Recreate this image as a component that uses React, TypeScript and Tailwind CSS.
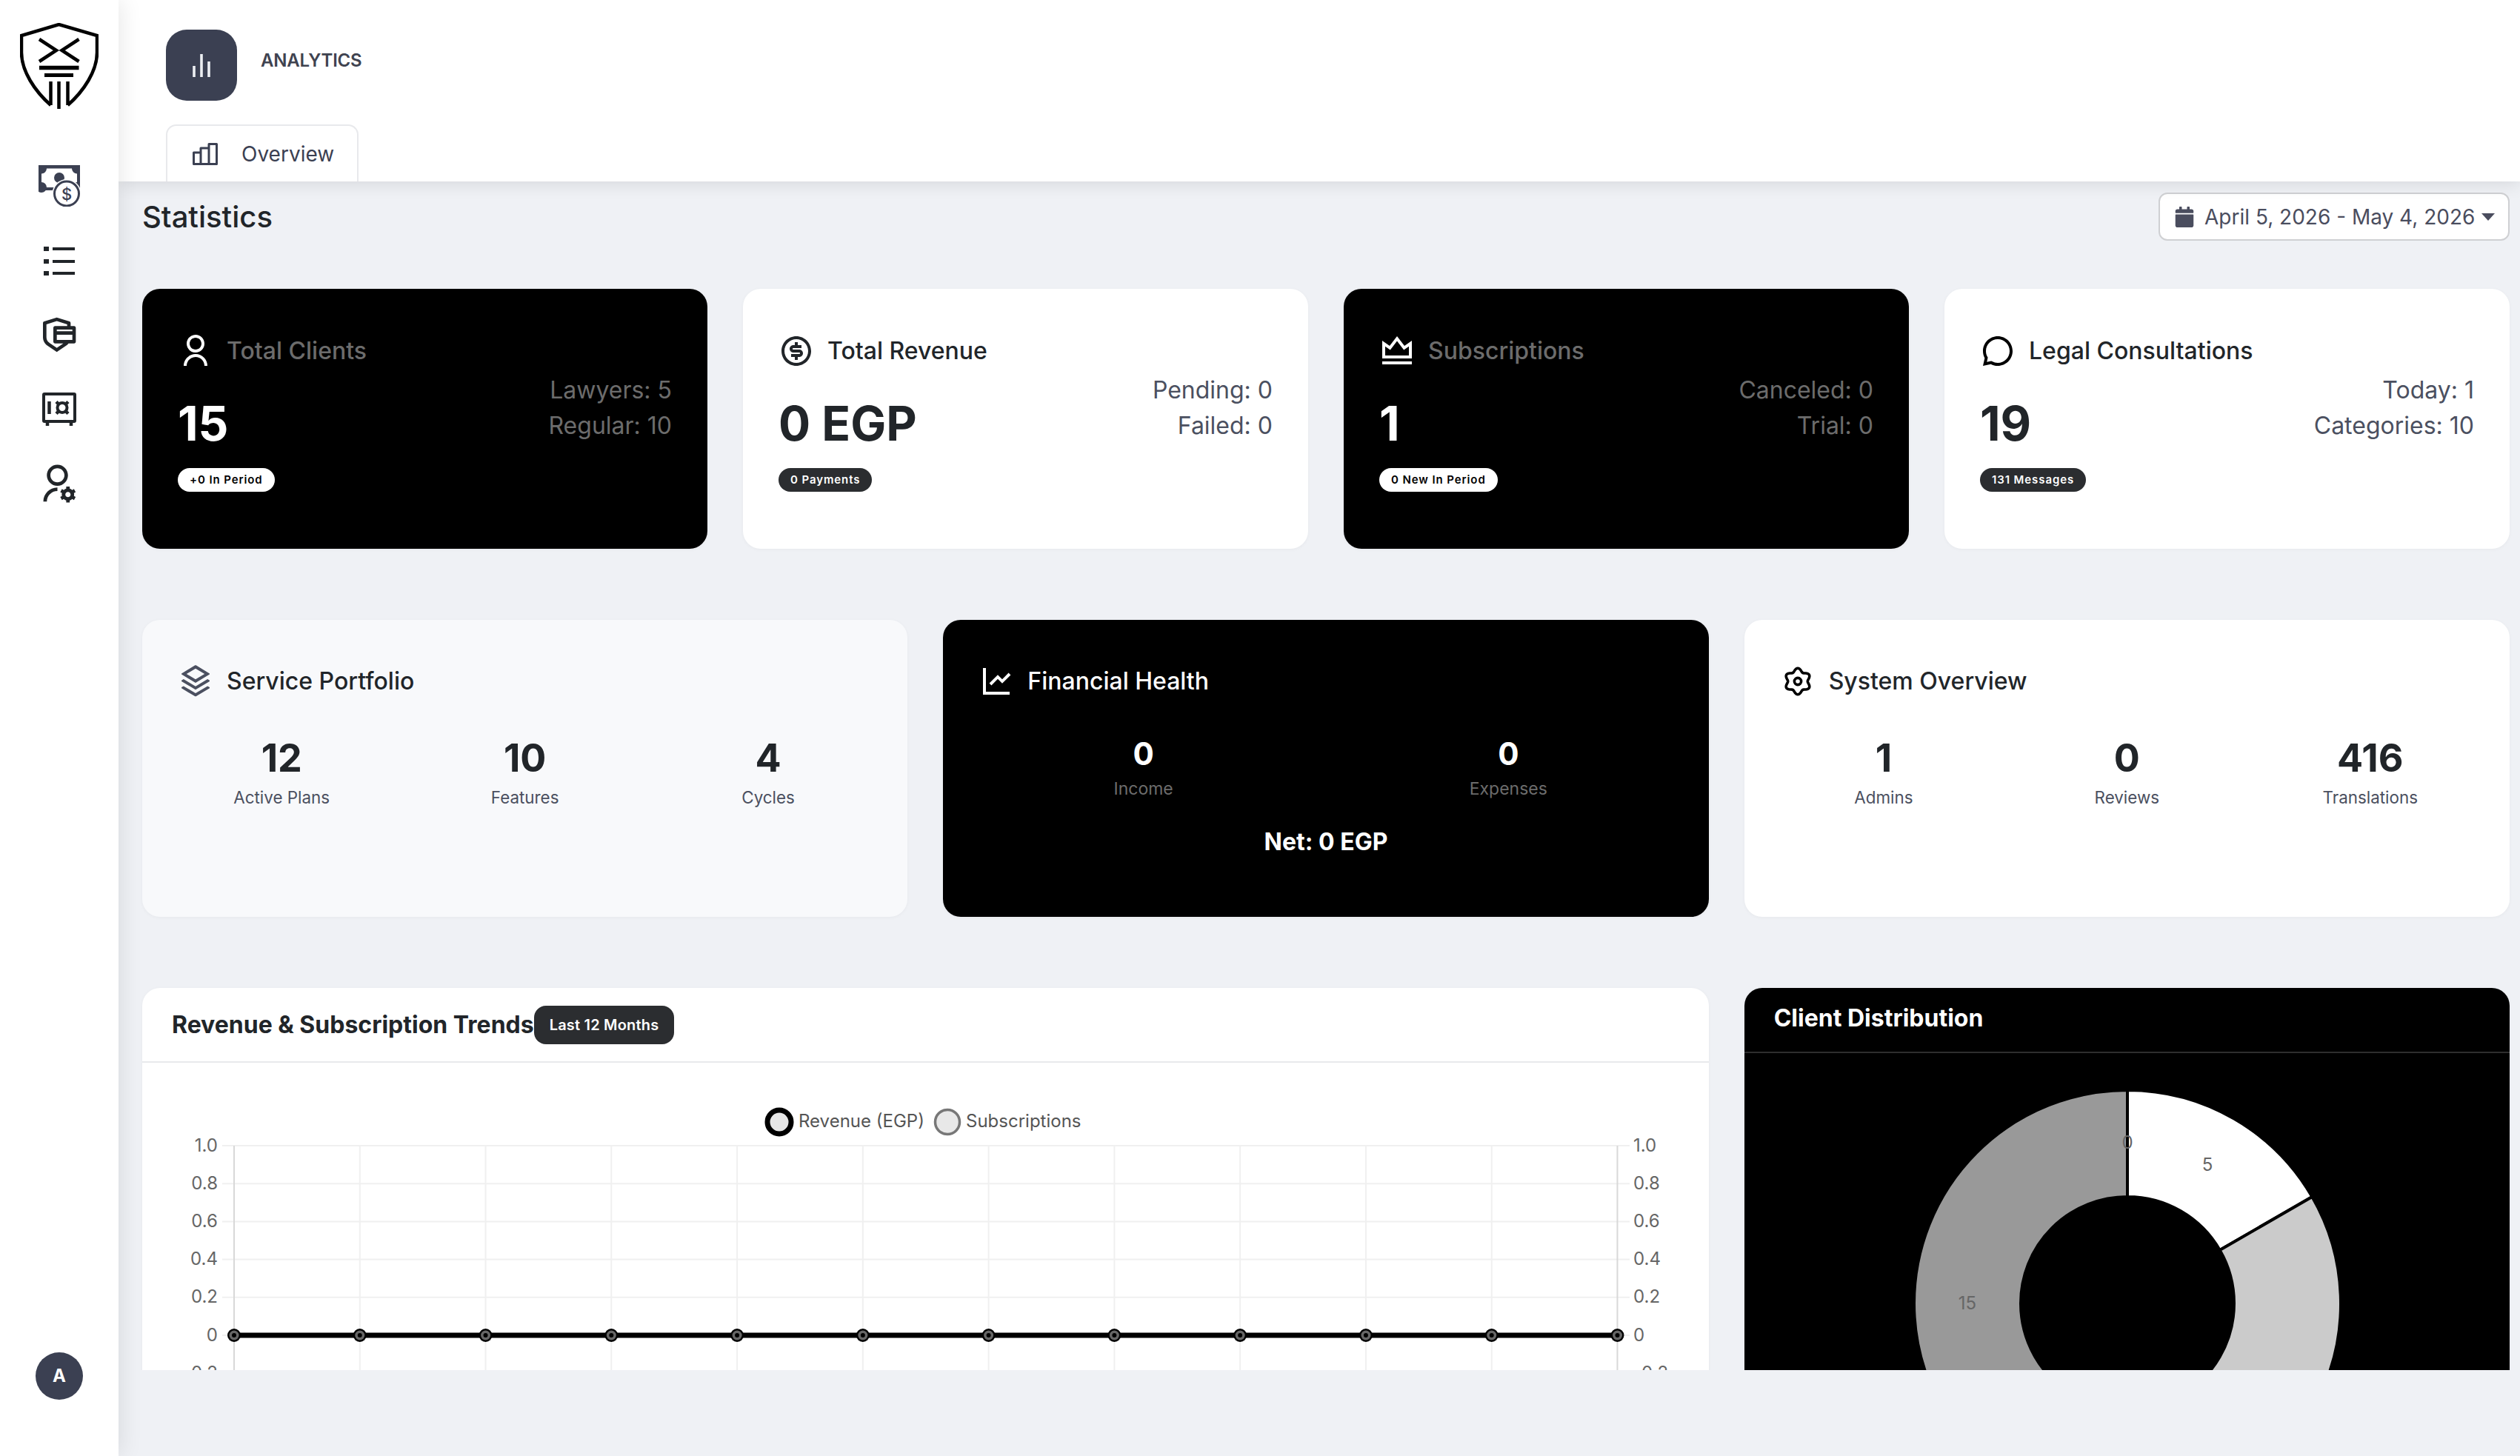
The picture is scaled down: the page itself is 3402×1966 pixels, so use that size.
import { RiUserLine, RiMoneyDollarCircleLine, RiVipCrownLine, RiChat3Line, RiStackLine, RiLineChartLine, RiSecurePaymentLine, RiUserSettingsLine } from 'react-icons/ri';
import { FaCalendar } from 'react-icons/fa';
import type { ReactNode } from 'react';

const ticks = ['1.0', '0.8', '0.6', '0.4', '0.2', '0', '-0.2'];
const points = Array.from({ length: 12 }, (_, i) => 124 + i * 169.77);

function Logo() {
  return (
    <svg width="106" height="116" viewBox="0 0 106 116" fill="none" stroke="#000">
      <path d="M41.5 111 C20 92 2 65 2 40 V17 L52.5 2 L104 17 V40 C104 65 86 92 64.5 111" strokeWidth="4.5" />
      <path d="M26 22 L49 37 L26 52 M79.5 22 L56.5 37 L79.5 52" strokeWidth="4.5" />
      <path d="M26 60.5 H79.5" strokeWidth="5.5" />
      <path d="M33 70.5 H72" strokeWidth="5" />
      <path d="M41.5 79 V111 M52.5 79 V116 M64.5 79 V111" strokeWidth="4.5" />
    </svg>
  );
}

function MoneyIcon() {
  return (
    <svg width="56" height="56" viewBox="0 0 56 56" fill="none">
      <rect x="0" y="0" width="56" height="34" rx="2" fill="#3b4052" />
      <rect x="4" y="4.5" width="48" height="25.5" fill="#fff" />
      <circle cx="4" cy="4.5" r="7" fill="#3b4052" />
      <circle cx="52" cy="4.5" r="7" fill="#3b4052" />
      <circle cx="4" cy="30" r="7" fill="#3b4052" />
      <circle cx="52" cy="30" r="7" fill="#3b4052" />
      <circle cx="28" cy="17" r="7" fill="#3b4052" />
      <circle cx="38" cy="38.5" r="19.5" fill="#fff" />
      <circle cx="38" cy="38.5" r="16.5" fill="#fff" stroke="#3b4052" strokeWidth="3" />
      <text x="38" y="46.5" textAnchor="middle" fontSize="22" fontWeight="500" fill="#3b4052" className="[font-family:Inter,sans-serif]">$</text>
    </svg>
  );
}

function ListIcon() {
  return (
    <svg width="42" height="40" viewBox="0 0 42 40" fill="#212529">
      <rect x="0" y="0" width="7" height="6" />
      <rect x="12" y="1" width="30" height="4" />
      <rect x="0" y="17" width="7" height="6" />
      <rect x="12" y="18" width="30" height="4" />
      <rect x="0" y="33" width="7" height="6" />
      <rect x="12" y="34" width="30" height="4" />
    </svg>
  );
}

function SafeIcon() {
  return (
    <svg width="46" height="45" viewBox="0 0 46 45" fill="none" stroke="#212529">
      <rect x="2" y="2" width="42" height="37" rx="1" strokeWidth="4" />
      <path d="M7 39 V45 M39 39 V45" strokeWidth="4.5" />
      <path d="M9.5 12 V29" strokeWidth="4.5" />
      <circle cx="27" cy="20.5" r="6.5" strokeWidth="4" />
      <path d="M19 12.5 L22.5 16 M35 12.5 L31.5 16 M19 28.5 L22.5 25 M35 28.5 L31.5 25" strokeWidth="4.5" />
    </svg>
  );
}

// six lobed gear, the icon packages have none with this small hub
function GearIcon() {
  const outline = Array.from({ length: 120 }, (_, i) => {
    const a = (i * Math.PI) / 60;
    const r = 15.5 + 2.2 * Math.cos(6 * a);
    return `${24 + r * Math.sin(a)} ${24 - r * Math.cos(a)}`;
  }).join(' L');
  return (
    <svg width="48" height="48" viewBox="0 0 48 48" fill="none" stroke="#000" strokeWidth="3.6" strokeLinejoin="round">
      <path d={`M${outline} Z`} />
      <circle cx="24" cy="24" r="4.6" />
    </svg>
  );
}

function Sidebar() {
  return (
    <aside className="relative z-20 flex h-full w-[160px] shrink-0 flex-col items-center bg-white pt-[31px] shadow-[4px_0_28px_rgba(0,0,0,0.09)]">
      <Logo />
      <div className="mt-[76px] flex h-[55px] items-center justify-center">
        <MoneyIcon />
      </div>
      <div className="mt-[55px]">
        <ListIcon />
      </div>
      <RiSecurePaymentLine className="mt-[51px] -ml-[2px] text-[#212529]" size={56} />
      <div className="mt-[50px]">
        <SafeIcon />
      </div>
      <RiUserSettingsLine className="mt-[50px] -ml-[6px] text-[#212529]" size={57} />
      <div className="mt-auto mb-[76px] flex h-16 w-16 items-center justify-center rounded-full bg-[#3b4052] text-[24px] font-bold text-white">A</div>
    </aside>
  );
}

function Header() {
  return (
    <header className="relative z-10 h-[245px] shrink-0 bg-white pt-[40px] pl-[64px] shadow-[0_4px_22px_rgba(0,0,0,0.1)]">
      <div className="flex items-center gap-[32px]">
        <div className="flex h-[96px] w-[96px] items-center justify-center rounded-[28px] bg-[#3b4052]">
          <svg width="28" height="32" viewBox="0 0 28 32" stroke="#eceef2" strokeWidth="3.6">
            <path d="M4 17 V32 M14 1 V32 M24 11 V32" />
          </svg>
        </div>
        <span className="pb-[12px] text-[24px] font-semibold tracking-[-0.2px] text-[#3f4350]">ANALYTICS</span>
      </div>
      <div className="mt-[32px] flex h-[77px] w-[260px] items-center gap-[32px] rounded-t-[14px] border-2 border-b-0 border-[#e8e9ec] bg-white pl-[34px] text-[#3b4052]">
        <svg width="34" height="30" viewBox="0 0 34 30" fill="none" stroke="#3b4052" strokeWidth="3" strokeLinejoin="round">
          <path d="M1.5 28.5 V13 H11 V7 H22 V1.5 H32.5 V28.5 Z M11 13 V28.5 M22 7 V28.5" />
        </svg>
        <span className="text-[28px]">Overview</span>
      </div>
    </header>
  );
}

type StatProps = {
  dark?: boolean;
  icon: ReactNode;
  title: string;
  value: string;
  badge: string;
  lines: string[];
};

function StatCard({ dark, icon, title, value, badge, lines }: StatProps) {
  return (
    <div className={`h-[351px] rounded-[24px] px-[48px] pt-[60px] shadow-[0_1px_5px_rgba(0,0,0,0.04)] ${dark ? 'bg-black text-white' : 'bg-white text-[#212529]'}`}>
      <div className="flex h-[48px] items-center gap-[18px]">
        {icon}
        <span className={`text-[32px] font-medium ${dark ? 'text-[#6c6c6c]' : 'text-[#212529]'}`}>{title}</span>
      </div>
      <div className="mt-[-1px] flex justify-between">
        <div>
          <div className="mt-[39px] text-[64px] leading-[72px] font-bold">{value}</div>
          <span className={`mt-[24px] inline-block h-[32px] rounded-full px-[16px] text-[15px] leading-[32px] font-semibold tracking-[0.9px] ${dark ? 'bg-white text-black' : 'bg-[#2b2d30] text-white'}`}>{badge}</span>
        </div>
        <div className={`mt-[6px] text-right text-[32px] leading-[48px] ${dark ? 'text-[#6c6c6c]' : 'text-[#4b5060]'}`}>
          {lines.map((l) => (
            <div key={l}>{l}</div>
          ))}
        </div>
      </div>
    </div>
  );
}

function MiniStat({ value, label }: { value: string; label: string }) {
  return (
    <div className="text-center">
      <div className="text-[52px] leading-[64px] font-bold text-[#212529]">{value}</div>
      <div className="mt-[3px] text-[22.4px] leading-[36px] text-[#4b5060]">{label}</div>
    </div>
  );
}

function LineChart() {
  return (
    <svg width="2115" height="520" viewBox="0 0 2115 520" className="block [font-family:Inter,sans-serif]">
      {ticks.map((t, i) => {
        const y = 112 + i * 51.2;
        return (
          <g key={t}>
            <path d={`M108 ${y} H2008`} stroke="#f0f0f0" strokeWidth="2" />
            <text x="102" y={y + 7.5} textAnchor="end" fontSize="24" fill="#666">{t}</text>
            <text x="2013" y={y + 7.5} fontSize="24" fill="#666">{t}</text>
          </g>
        );
      })}
      {points.map((x, i) => (
        <path key={x} d={`M${x} 112 V520`} stroke={i === 0 || i === 11 ? '#d8d8d8' : '#f0f0f0'} strokeWidth="2" />
      ))}
      <path d={`M124 368 H${points[11]}`} stroke="#000" strokeWidth="7" />
      {points.map((x) => (
        <g key={x}>
          <circle cx={x} cy="368" r="9" fill="#000" />
          <circle cx={x} cy="368" r="6.5" fill="#666" />
          <circle cx={x} cy="368" r="3" fill="#000" />
        </g>
      ))}
      <circle cx="860" cy="80" r="16" fill="#e6e6e6" stroke="#000" strokeWidth="7" />
      <text x="886" y="86.5" fontSize="24" fill="#555">Revenue (EGP)</text>
      <circle cx="1087" cy="80" r="16.5" fill="#e8e8e8" stroke="#777" strokeWidth="3.5" />
      <text x="1112" y="86.5" fontSize="24" fill="#555">Subscriptions</text>
    </svg>
  );
}

function polar(r: number, deg: number) {
  const a = ((deg - 90) * Math.PI) / 180;
  return [517 + r * Math.cos(a), 338 + r * Math.sin(a)];
}

function slice(from: number, to: number) {
  const [x1, y1] = polar(288, from);
  const [x2, y2] = polar(288, to);
  const [x3, y3] = polar(144, to);
  const [x4, y4] = polar(144, from);
  return `M${x1} ${y1} A288 288 0 0 1 ${x2} ${y2} L${x3} ${y3} A144 144 0 0 0 ${x4} ${y4} Z`;
}

function Donut() {
  return (
    <svg width="1033" height="640" viewBox="0 0 1033 640" className="block [font-family:Inter,sans-serif]">
      <path d={slice(0, 60)} fill="#fff" stroke="#000" strokeWidth="4" />
      <path d={slice(60, 180)} fill="#cbcbcb" stroke="#000" strokeWidth="4" />
      <path d={slice(180, 360)} fill="#999" stroke="#000" strokeWidth="4" />
      <text x="517" y="129" textAnchor="middle" fontSize="24" fill="#666">0</text>
      <text x="625" y="159" textAnchor="middle" fontSize="24" fill="#666">5</text>
      <text x="301" y="346" textAnchor="middle" fontSize="24" fill="#666">15</text>
    </svg>
  );
}

export default function App() {
  return (
    <div className="flex h-[1966px] w-[3402px] overflow-hidden bg-[#eff1f5] text-[#212529] [font-family:Inter,sans-serif]">
      <Sidebar />
      <main className="flex min-w-0 flex-1 flex-col">
        <Header />
        <div className="h-[1605px] overflow-hidden pt-[15px] pr-[14px] pl-[32px]">
          <div className="flex h-[65px] items-center justify-between">
            <h1 className="text-[40px] font-medium">Statistics</h1>
            <div className="flex h-[65px] w-[474px] items-center rounded-[12px] border-2 border-[#cfd0d3] bg-white pl-[19px] text-[#4a4d5e]">
              <FaCalendar size={28} />
              <span className="ml-[13px] text-[28px]">April 5, 2026 - May 4, 2026</span>
              <svg className="ml-[9px]" width="18" height="10" viewBox="0 0 18 10" fill="#4a4d5e">
                <path d="M0 0 H18 L9 10 Z" />
              </svg>
            </div>
          </div>

          <div className="mt-[65px] grid grid-cols-4 gap-[48px]">
            <StatCard dark icon={<RiUserLine size={48} className="text-white" />} title="Total Clients" value="15" badge="+0 In Period" lines={['Lawyers: 5', 'Regular: 10']} />
            <StatCard icon={<RiMoneyDollarCircleLine size={48} className="text-[#212529]" />} title="Total Revenue" value="0 EGP" badge="0 Payments" lines={['Pending: 0', 'Failed: 0']} />
            <StatCard dark icon={<RiVipCrownLine size={48} className="text-white" />} title="Subscriptions" value="1" badge="0 New In Period" lines={['Canceled: 0', 'Trial: 0']} />
            <StatCard icon={<RiChat3Line size={48} className="text-black" />} title="Legal Consultations" value="19" badge="131 Messages" lines={['Today: 1', 'Categories: 10']} />
          </div>

          <div className="mt-[96px] grid grid-cols-3 gap-[48px]">
            <div className="h-[401px] rounded-[24px] bg-[#f8f9fb] p-[24px] pt-[59px] shadow-[0_1px_5px_rgba(0,0,0,0.04)]">
              <div className="flex h-[48px] items-center gap-[18px] pl-[24px]">
                <RiStackLine size={48} className="text-[#4b5060]" />
                <span className="text-[32px] font-medium">Service Portfolio</span>
              </div>
              <div className="mt-[48px] grid grid-cols-3">
                <MiniStat value="12" label="Active Plans" />
                <MiniStat value="10" label="Features" />
                <MiniStat value="4" label="Cycles" />
              </div>
            </div>

            <div className="h-[401px] rounded-[24px] bg-black p-[24px] pt-[59px] text-white shadow-[0_1px_5px_rgba(0,0,0,0.04)]">
              <div className="flex h-[48px] items-center gap-[18px] pl-[24px]">
                <RiLineChartLine size={48} />
                <span className="text-[32px] font-medium">Financial Health</span>
              </div>
              <div className="mt-[48px] grid grid-cols-2 text-center">
                <div>
                  <div className="text-[42px] leading-[52px] font-bold">0</div>
                  <div className="mt-[3px] text-[23px] leading-[36px] text-[#6c6c6c]">Income</div>
                </div>
                <div>
                  <div className="text-[42px] leading-[52px] font-bold">0</div>
                  <div className="mt-[3px] text-[23px] leading-[36px] text-[#6c6c6c]">Expenses</div>
                </div>
              </div>
              <div className="mt-[30px] text-center text-[32px] leading-[48px] font-bold">Net: 0 EGP</div>
            </div>

            <div className="h-[401px] rounded-[24px] bg-white p-[24px] pt-[59px] shadow-[0_1px_5px_rgba(0,0,0,0.04)]">
              <div className="flex h-[48px] items-center gap-[18px] pl-[24px]">
                <GearIcon />
                <span className="text-[32px] font-medium">System Overview</span>
              </div>
              <div className="mt-[48px] grid grid-cols-3">
                <MiniStat value="1" label="Admins" />
                <MiniStat value="0" label="Reviews" />
                <MiniStat value="416" label="Translations" />
              </div>
            </div>
          </div>

          <div className="mt-[96px] grid grid-cols-3 gap-[48px]">
            <div className="col-span-2 overflow-hidden rounded-[24px] bg-white shadow-[0_1px_5px_rgba(0,0,0,0.04)]">
              <div className="flex h-[101px] items-center border-b-2 border-[#e8e9ec] pl-[40px]">
                <span className="text-[32px] font-bold">Revenue &amp; Subscription Trends</span>
                <span className="flex h-[52px] items-center rounded-[16px] bg-[#2b2d30] px-[21px] text-[20px] font-semibold tracking-[0.2px] text-white">Last 12 Months</span>
              </div>
              <LineChart />
            </div>
            <div className="overflow-hidden rounded-[24px] bg-black shadow-[0_1px_5px_rgba(0,0,0,0.04)]">
              <div className="flex h-[88px] items-center border-b-2 border-[#2e2e2e] pb-[4px] pl-[40px] text-[32px] font-bold text-white">Client Distribution</div>
              <Donut />
            </div>
          </div>
        </div>
      </main>
    </div>
  );
}
